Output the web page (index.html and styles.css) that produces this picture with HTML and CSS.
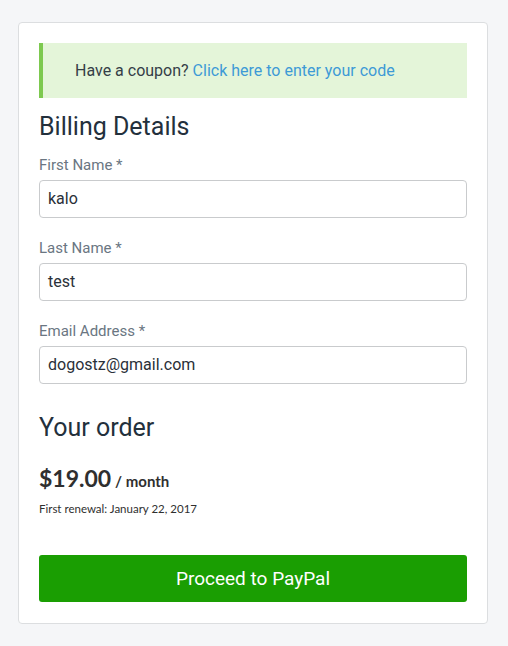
FILE: index.html
```html
<!DOCTYPE html>
<html>
<head>
<meta charset="utf-8">
<link rel="stylesheet" href="styles.css">
</head>
<body>
<div class="card">
  <div class="notice">Have a coupon? <a class="notice-link">Click here to enter your code</a></div>
  <h2 class="heading">Billing Details</h2>
  <div class="field">
    <label class="label">First Name *</label>
    <div class="input">kalo</div>
  </div>
  <div class="field">
    <label class="label">Last Name *</label>
    <div class="input">test</div>
  </div>
  <div class="field">
    <label class="label">Email Address *</label>
    <div class="input">dogostz@gmail.com</div>
  </div>
  <h2 class="heading order-heading">Your order</h2>
  <div class="price"><span class="amount">$19.00</span> <span class="period">/ month</span></div>
  <div class="renewal">First renewal: January 22, 2017</div>
  <button class="btn">Proceed to PayPal</button>
</div>
</body>
</html>
```
FILE: styles.css
```css
html, body { margin: 0; padding: 0; }
body {
  background: #f5f6f8;
  font-family: Roboto, "Liberation Sans", sans-serif;
  padding: 22px 20px 0 18px;
}
.card {
  background: #fff;
  border: 1px solid #dcdee0;
  border-radius: 4px;
  padding: 20px 20px 21px 20px;
  width: 428px;
}
.notice {
  background: #e4f5d9;
  border-left: 4px solid #7dc94f;
  height: 55px;
  box-sizing: border-box;
  padding: 17px 0 0 32px;
  font-size: 16px;
  color: #343e47;
  line-height: 21px;
}
.notice-link { color: #3d9ad6; }
.heading {
  font-weight: 400;
  font-size: 25px;
  color: #23303c;
  margin: 14px 0 13px;
  line-height: 30px;
}
.field { margin-bottom: 20px; }
.label {
  display: block;
  font-size: 15px;
  color: #6a7682;
  line-height: 20px;
  margin-bottom: 5px;
}
.input {
  height: 38px;
  box-sizing: border-box;
  border: 1px solid #c9cbcd;
  border-radius: 4px;
  padding: 0 8px;
  font-size: 16px;
  color: #2a3038;
  line-height: 36px;
}
.order-heading { margin-top: 29px; margin-bottom: 21px; }
.price {
  font-family: Lato, sans-serif;
  font-weight: 700;
  color: #2f2f2f;
  line-height: 28px;
}
.amount { font-size: 23px; }
.period { font-size: 15px; }
.renewal {
  font-family: Lato, sans-serif;
  font-size: 11.5px;
  color: #2f2f2f;
  margin-top: 6px;
  line-height: 15px;
}
.btn {
  display: block;
  width: 100%;
  margin-top: 39px;
  height: 47px;
  background: #1a9e02;
  border: none;
  border-radius: 3px;
  color: #fff;
  font-family: Roboto, sans-serif;
  font-size: 19px;
}
```
